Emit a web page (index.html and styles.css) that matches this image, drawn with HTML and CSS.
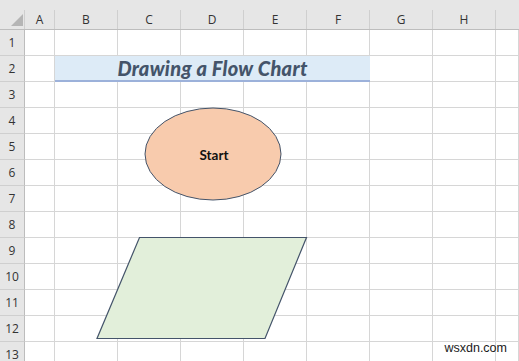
FILE: index.html
```html
<!DOCTYPE html>
<html lang="en">
<head>
  <meta charset="UTF-8" />
  <meta name="viewport" content="width=device-width, initial-scale=1.0" />
  <title>Drawing a Flow Chart</title>
  <link rel="stylesheet" href="styles.css">
</head>
<body>
<div class="sheet">
  <div class="ribbon-edge"></div>

  <!-- Column headers -->
  <div class="row head-row">
    <div class="corner"><span class="corner-mark"></span></div>
    <div class="col-head col-a">A</div>
    <div class="col-head">B</div>
    <div class="col-head">C</div>
    <div class="col-head">D</div>
    <div class="col-head">E</div>
    <div class="col-head">F</div>
    <div class="col-head">G</div>
    <div class="col-head">H</div>
    <div class="col-head col-last"></div>
  </div>

  <div id="rows"></div>

  <!-- Shapes drawn over the grid -->
  <svg class="shapes" width="519" height="361" viewBox="0 0 519 361">
    <ellipse cx="213" cy="154" rx="68" ry="46" fill="#f8cbad" stroke="#44546a" stroke-width="1" />
    <text x="214" y="160" class="shape-label" text-anchor="middle">Start</text>
    <polygon points="139.5,237.5 306.5,237.5 265,338.5 97,338.5" fill="#e2efda" stroke="#44546a" stroke-width="1.2" />
  </svg>

  <div class="watermark">wsxdn.com</div>
</div>

<script>
  const rowsEl = document.getElementById("rows");
  const cols = ["A", "B", "C", "D", "E", "F", "G", "H", "I"];
  for (let r = 1; r <= 13; r++) {
    let html = `<div class="row"><div class="row-head">${r}</div>`;
    if (r === 2) {
      html += `<div class="cell col-a"></div>`;
      html += `<div class="cell title">Drawing a Flow Chart</div>`;
      html += `<div class="cell"></div><div class="cell"></div><div class="cell col-last"></div>`;
    } else {
      cols.forEach(c => {
        const cls = c === "A" ? "cell col-a" : c === "I" ? "cell col-last" : "cell";
        html += `<div class="${cls}"></div>`;
      });
    }
    html += `</div>`;
    rowsEl.innerHTML += html;
  }
</script>
</body>
</html>
```

FILE: styles.css
```css
* { box-sizing: border-box; }
body { margin: 0; background: #fff; font-family: "Open Sans", "Liberation Sans", sans-serif; overflow: hidden; }
.sheet { position: relative; width: 519px; height: 361px; overflow: hidden; }
.ribbon-edge { height: 10px; background: #e6e6e6; }

.row { display: flex; height: 26px; }
.head-row { height: 20px; background: #e6e6e6; border-bottom: 1px solid #bdbdbd; }

.corner { width: 25px; flex: none; position: relative; border-right: 1px solid #cfcfcf; }
.corner-mark { position: absolute; left: 11px; top: 4px; width: 12px; height: 12px; background: #b5b5b5; clip-path: polygon(100% 0, 100% 100%, 0 100%); }

.col-head { width: 63px; flex: none; border-right: 1px solid #cfcfcf; font-size: 12px; color: #333; text-align: center; line-height: 19px; }
.col-a { width: 30px; }
.col-last { flex: 1; width: auto; border-right: none; }

.row-head { width: 25px; flex: none; background: #e6e6e6; border-right: 1px solid #bdbdbd; border-bottom: 1px solid #cfcfcf; font-size: 12px; color: #333; text-align: center; line-height: 26px; }
.cell { width: 63px; flex: none; border-right: 1px solid #d6d6d6; border-bottom: 1px solid #d6d6d6; }
.cell.col-a { width: 30px; }
.cell.col-last { flex: 1; width: auto; }

.title { width: 315px; background: #ddebf7; border-bottom: 2px solid #9cb1da; border-right: none; color: #44546a; font-family: Lato, "Open Sans", sans-serif; font-weight: 900; font-style: italic; font-size: 20px; letter-spacing: 0.3px; text-align: center; line-height: 25px; }

.shapes { position: absolute; left: 0; top: 0; pointer-events: none; }
.shape-label { font-family: Lato, "Open Sans", sans-serif; font-weight: bold; font-size: 13.5px; fill: #111; }

.watermark { position: absolute; right: 12px; bottom: 6px; font-family: "Liberation Sans", Arial, sans-serif; font-size: 12.5px; color: #1a1a1a; }
```
